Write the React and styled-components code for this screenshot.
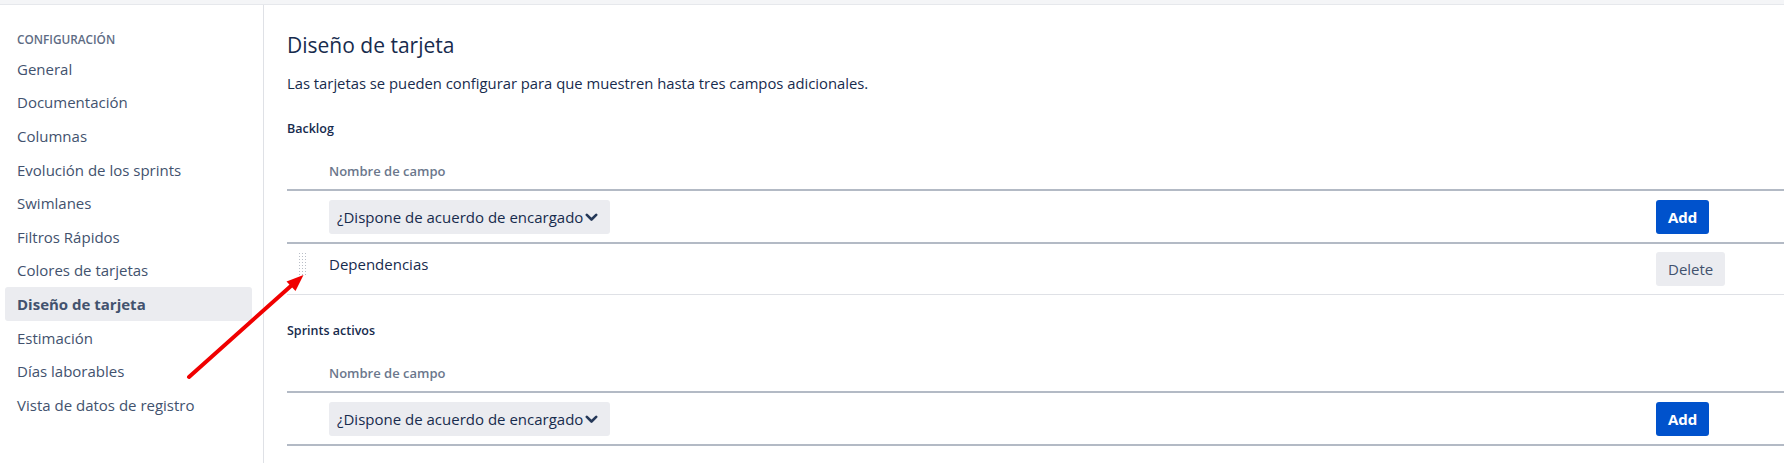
import React from 'react';
import styled, { createGlobalStyle } from 'styled-components';

const GlobalStyle = createGlobalStyle`
  html, body {
    margin: 0;
    padding: 0;
    background: #fff;
  }
  body {
    font-family: "Open Sans", "Noto Sans", sans-serif;
    color: #172b4d;
  }
  * { box-sizing: border-box; }
`;

const navItems = [
  'General',
  'Documentación',
  'Columnas',
  'Evolución de los sprints',
  'Swimlanes',
  'Filtros Rápidos',
  'Colores de tarjetas',
  'Diseño de tarjeta',
  'Estimación',
  'Días laborables',
  'Vista de datos de registro',
];

const sections = [
  { title: 'Backlog', rows: ['Dependencias'] },
  { title: 'Sprints activos', rows: [] },
];

const Chevron = () => (
  <svg width="13" height="9" viewBox="0 0 13 9">
    <path d="M1.8 1.8 L6.5 6.5 L11.2 1.8" fill="none" stroke="#253858" strokeWidth="2.6" strokeLinecap="round" strokeLinejoin="round" />
  </svg>
);

const Arrow = () => (
  <ArrowLayer width="140" height="125" viewBox="0 0 140 125">
    <line x1="9" y1="112" x2="112" y2="20" stroke="#f00000" strokeWidth="4" strokeLinecap="round" />
    <polygon points="123.5,10 106.5,16.5 115.5,26" fill="#f00000" />
  </ArrowLayer>
);

function FieldTable({ rows }) {
  return (
    <Table>
      <Row head>
        <Cell />
        <HeadText>Nombre de campo</HeadText>
        <Cell />
      </Row>
      <Row add>
        <Cell />
        <Cell>
          <Select>
            <span>¿Dispone de acuerdo de encargado</span>
            <Chevron />
          </Select>
        </Cell>
        <Cell>
          <Button primary>Add</Button>
        </Cell>
      </Row>
      {rows.map((r) => (
        <Row key={r}>
          <Cell>
            <Handle />
          </Cell>
          <FieldName>{r}</FieldName>
          <Cell>
            <Button>Delete</Button>
          </Cell>
        </Row>
      ))}
    </Table>
  );
}

export default function App() {
  return (
    <Page>
      <GlobalStyle />
      <TopStrip />
      <Body>
        <Sidebar>
          <SideTitle>Configuración</SideTitle>
          {navItems.map((item) => (
            <NavItem key={item} active={item === 'Diseño de tarjeta'}>
              {item}
            </NavItem>
          ))}
        </Sidebar>
        <Main>
          <Heading>Diseño de tarjeta</Heading>
          <Description>
            Las tarjetas se pueden configurar para que muestren hasta tres campos adicionales.
          </Description>
          {sections.map((s) => (
            <Section key={s.title}>
              <SectionTitle>{s.title}</SectionTitle>
              <FieldTable rows={s.rows} />
            </Section>
          ))}
        </Main>
      </Body>
      <Arrow />
    </Page>
  );
}

const Page = styled.div`
  position: relative;
  display: flex;
  flex-direction: column;
  height: 463px;
  overflow: hidden;
`;

const TopStrip = styled.div`
  height: 5px;
  flex-shrink: 0;
  background: #f4f5f7;
  border-bottom: 1px solid #e6e8ec;
`;

const Body = styled.div`
  display: flex;
  flex: 1;
`;

const Sidebar = styled.nav`
  width: 264px;
  flex-shrink: 0;
  border-right: 1px solid #dfe1e6;
  padding: 26px 11px 0 5px;
`;

const SideTitle = styled.div`
  padding-left: 12px;
  font-size: 11.8px;
  line-height: 16px;
  font-weight: 600;
  text-transform: uppercase;
  color: #5e6c84;
  margin-bottom: 5px;
`;

const NavItem = styled.div`
  height: 33.6px;
  display: flex;
  align-items: center;
  padding-left: 12px;
  border-radius: 3px;
  font-size: 15px;
  color: #42526e;
  font-weight: ${(p) => (p.active ? 700 : 400)};
  background: ${(p) => (p.active ? '#ebecf0' : 'transparent')};
`;

const Main = styled.main`
  flex: 1;
  padding: 26px 0 0 23px;
`;

const Heading = styled.h2`
  margin: 0;
  font-size: 21px;
  line-height: 28px;
  font-weight: 500;
  color: #172b4d;
`;

const Description = styled.p`
  margin: 13px 0 0;
  font-size: 14.8px;
  line-height: 22px;
  color: #172b4d;
`;

const Section = styled.section`
  margin-top: 26px;
  & + & {
    margin-top: 27px;
  }
`;

const SectionTitle = styled.h4`
  margin: 0;
  font-size: 12.5px;
  line-height: 18px;
  font-weight: 600;
  color: #172b4d;
`;

const Table = styled.div`
  margin-top: 15px;
`;

const Row = styled.div`
  display: grid;
  grid-template-columns: 42px 1fr 128px;
  align-items: start;
  padding: ${(p) => (p.add ? '9px 0 8px' : '8px 0')};
  border-bottom: ${(p) => (p.head || p.add ? '2px solid #b3bac5' : '1px solid #dfe1e6')};
`;

const Cell = styled.div`
  min-height: 1px;
`;

const HeadText = styled.div`
  font-size: 13px;
  line-height: 20px;
  font-weight: 600;
  color: #6b778c;
`;

const FieldName = styled.div`
  font-size: 15px;
  line-height: 24px;
  color: #172b4d;
`;

const Select = styled.div`
  display: inline-flex;
  align-items: center;
  gap: 2px;
  width: 281px;
  height: 34px;
  padding: 0 8px;
  border-radius: 3px;
  background: #ebecf0;
  font-size: 15px;
  color: #172b4d;
  white-space: nowrap;
`;

const Button = styled.button`
  height: 34px;
  padding: 0 12px;
  border: none;
  border-radius: 3px;
  font-family: inherit;
  font-size: 15px;
  font-weight: ${(p) => (p.primary ? 700 : 400)};
  background: ${(p) => (p.primary ? '#0052cc' : '#ebecf0')};
  color: ${(p) => (p.primary ? '#fff' : '#42526e')};
`;

const Handle = styled.div`
  width: 9px;
  height: 25px;
  margin-left: 11px;
  background-image: radial-gradient(#b9bec7 0.9px, transparent 1px);
  background-size: 3px 3px;
`;

const ArrowLayer = styled.svg`
  position: absolute;
  left: 180px;
  top: 265px;
  pointer-events: none;
`;
